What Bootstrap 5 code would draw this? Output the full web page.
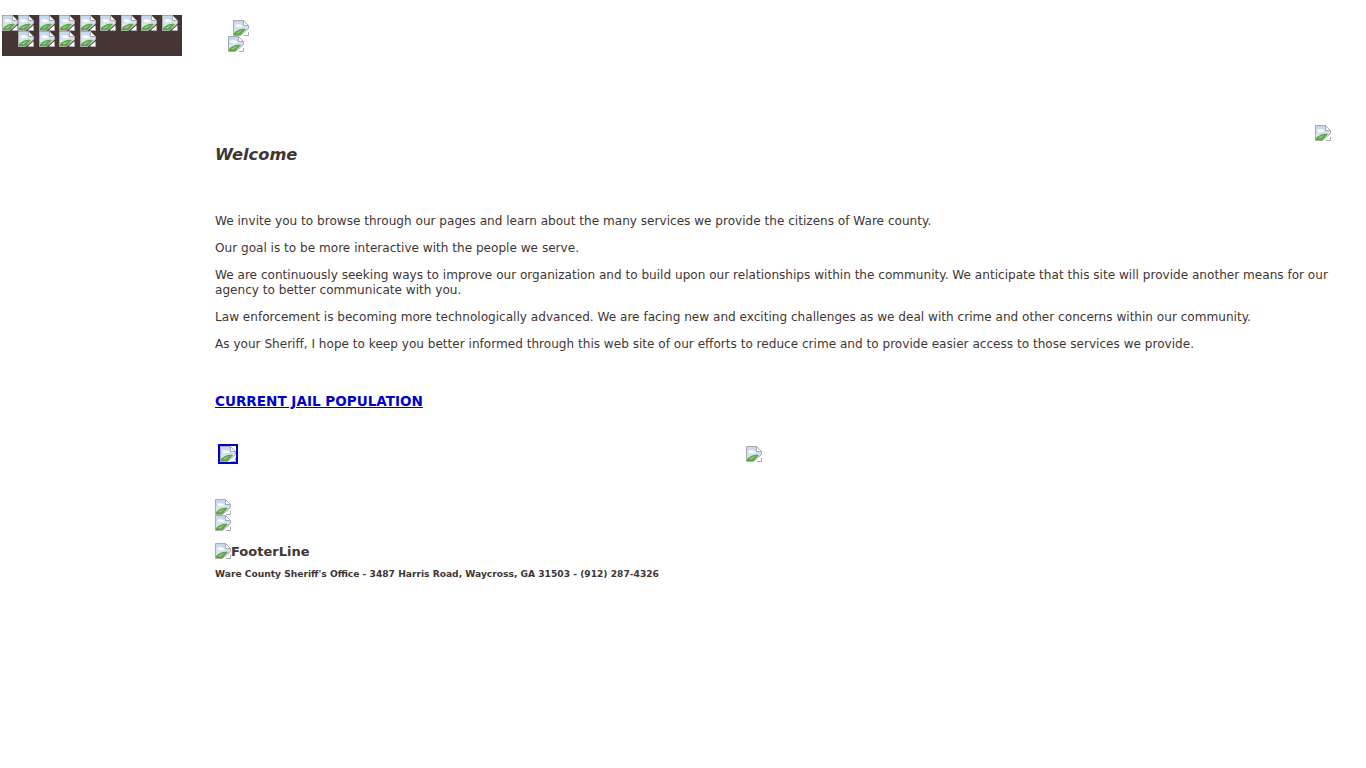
<!DOCTYPE html>
<html lang="en">
  <head>
    <meta charset="UTF-8" />
    <meta name="viewport" content="width=device-width, initial-scale=1.0" />
    <title>Ware County Sheriff's Office</title>
    <link href="https://cdn.jsdelivr.net/npm/bootstrap@5.3.0/dist/css/bootstrap.min.css" rel="stylesheet" />
    <style>
      body { background: #fff; color: #3f3534; font-family: "DejaVu Sans", Verdana, sans-serif; font-size: 12.09px; line-height: 15px; }
      .broken-pic { width: 16px; height: 16px; display: block; flex: none; }
      .top-area { height: 125px; padding-top: 15px; }
      .side-menu { width: 180px; height: 41px; margin-left: 2px; background: #463535; }
      .menu-row { gap: 4.5px; }
      .menu-row-two { padding-left: 16px; }
      .menu-first { margin-right: -4.5px; }
      .head-pics { margin-left: 46px; padding-top: 5px; }
      .head-pic-one { margin-left: 5px; }
      .page-body { margin-left: 215px; margin-right: 35px; }
      .corner-pic { height: 16px; }
      .welcome-title { font-size: 16.3px; line-height: 20px; font-weight: bold; font-style: italic; margin: 4px 0 49px; color: #3f3534; }
      .page-body p { margin: 0 0 12px; }
      .jail-link { display: block; margin: 41px 0 37px; font-size: 13.55px; font-weight: bold; color: #0000cc; line-height: 16px; }
      .pic-row { height: 18px; margin-bottom: 35px; }
      .pic-cell { width: 531px; }
      .framed-pic { border: 2px solid #0000cc; margin: -2px 0 0 3px; width: 20px; height: 20px; }
      .footer-line { font-size: 13px; font-weight: bold; line-height: 18px; margin-top: 12px; }
      .address-text { font-size: 9.15px; font-weight: bold; line-height: 13px; margin-top: 7px; }
    </style>
  </head>
  <body>
    <svg width="0" height="0" class="position-absolute">
      <defs>
        <linearGradient id="skyFill" x1="0" y1="0" x2="0" y2="1">
          <stop offset="0" stop-color="#c4d5f0" />
          <stop offset="1" stop-color="#e4ecf9" />
        </linearGradient>
      </defs>
      <symbol id="brokenPic" viewBox="0 0 16 16">
        <path d="M.5.5H10.5L15.5 5.5V8.5L7.5 15.5H.5Z" fill="url(#skyFill)" stroke="#ababab" />
        <path d="M10.5.5V5.5H15.5Z" fill="#fff" stroke="#ababab" />
        <path d="M2 5.5C4 3.5 8 4 10 6.5L5 7.5Z" fill="#fff" />
        <path d="M1 15V13C4 10 8 8 13 9L7.5 15Z" fill="#5aa843" />
        <path d="M3 13C5 11.5 7 10.5 9.5 10L5.5 13.5Z" fill="#97cf78" />
        <path d="M9.5 15.5L15.5 10V15.5Z" fill="#fff" />
        <path d="M11 15.5H15.5V12" fill="none" stroke="#ababab" />
      </symbol>
    </svg>

    <div class="top-area d-flex">
      <div class="side-menu flex-none">
        <div class="d-flex menu-row">
          <svg class="broken-pic menu-first"><use href="#brokenPic" /></svg>
          <svg class="broken-pic"><use href="#brokenPic" /></svg>
          <svg class="broken-pic"><use href="#brokenPic" /></svg>
          <svg class="broken-pic"><use href="#brokenPic" /></svg>
          <svg class="broken-pic"><use href="#brokenPic" /></svg>
          <svg class="broken-pic"><use href="#brokenPic" /></svg>
          <svg class="broken-pic"><use href="#brokenPic" /></svg>
          <svg class="broken-pic"><use href="#brokenPic" /></svg>
          <svg class="broken-pic"><use href="#brokenPic" /></svg>
        </div>
        <div class="d-flex menu-row menu-row-two">
          <svg class="broken-pic"><use href="#brokenPic" /></svg>
          <svg class="broken-pic"><use href="#brokenPic" /></svg>
          <svg class="broken-pic"><use href="#brokenPic" /></svg>
          <svg class="broken-pic"><use href="#brokenPic" /></svg>
        </div>
      </div>
      <div class="head-pics">
        <svg class="broken-pic head-pic-one"><use href="#brokenPic" /></svg>
        <svg class="broken-pic"><use href="#brokenPic" /></svg>
      </div>
    </div>

    <div class="page-body">
      <div class="corner-pic d-flex justify-content-end">
        <svg class="broken-pic"><use href="#brokenPic" /></svg>
      </div>
      <h1 class="welcome-title">Welcome</h1>
      <p>We invite you to browse through our pages and learn about the many services we provide the citizens of Ware county.</p>
      <p>Our goal is to be more interactive with the people we serve.</p>
      <p>We are continuously seeking ways to improve our organization and to build upon our relationships within the community. We anticipate that this site will provide another means for our agency to better communicate with you.</p>
      <p>Law enforcement is becoming more technologically advanced. We are facing new and exciting challenges as we deal with crime and other concerns within our community.</p>
      <p>As your Sheriff, I hope to keep you better informed through this web site of our efforts to reduce crime and to provide easier access to those services we provide.</p>
      <a class="jail-link" href="#">CURRENT JAIL POPULATION</a>
      <div class="pic-row d-flex">
        <div class="pic-cell">
          <a class="d-block framed-pic" href="#"><svg class="broken-pic"><use href="#brokenPic" /></svg></a>
        </div>
        <div class="pic-cell">
          <svg class="broken-pic"><use href="#brokenPic" /></svg>
        </div>
      </div>
      <svg class="broken-pic"><use href="#brokenPic" /></svg>
      <svg class="broken-pic"><use href="#brokenPic" /></svg>
      <div class="footer-line d-flex"><svg class="broken-pic"><use href="#brokenPic" /></svg>FooterLine</div>
      <div class="address-text">Ware County Sheriff's Office - 3487 Harris Road, Waycross, GA 31503 - (912) 287-4326</div>
    </div>

    <script src="https://cdn.jsdelivr.net/npm/bootstrap@5.3.0/dist/js/bootstrap.bundle.min.js"></script>
  </body>
</html>
